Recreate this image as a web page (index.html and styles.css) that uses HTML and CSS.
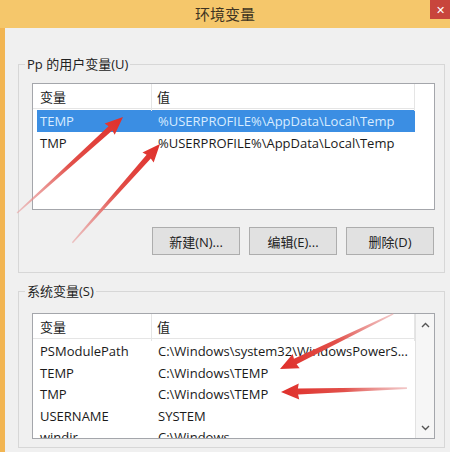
FILE: index.html
```html
<!DOCTYPE html>
<html lang="zh-CN">
<head>
    <meta charset="UTF-8">
    <meta name="viewport" content="width=device-width, initial-scale=1.0">
    <title>环境变量</title>
    <link rel="stylesheet" href="styles.css">
</head>
<body>

    <div class="titlebar">
        <div class="title">环境变量</div>
        <div class="close">✕</div>
    </div>

    <div class="frame">
        <div class="content">
            <!-- User variables -->
            <fieldset class="group user-group">
                <legend>Pp 的用户变量(U)</legend>
                <div class="list list-user">
                    <div class="list-main">
                        <div class="list-head">
                            <div class="cell">变量</div>
                            <div class="cell">值</div>
                        </div>
                        <div class="list-body">
                            <div class="row selected">
                                <span>TEMP</span>
                                <span>%USERPROFILE%\AppData\Local\Temp</span>
                            </div>
                            <div class="row">
                                <span>TMP</span>
                                <span>%USERPROFILE%\AppData\Local\Temp</span>
                            </div>
                        </div>
                    </div>
                </div>
                <div class="buttons">
                    <button class="btn">新建(N)...</button>
                    <button class="btn">编辑(E)...</button>
                    <button class="btn">删除(D)</button>
                </div>
            </fieldset>

            <!-- System variables -->
            <fieldset class="group system-group">
                <legend>系统变量(S)</legend>
                <div class="list list-system">
                    <div class="list-main">
                        <div class="list-head">
                            <div class="cell">变量</div>
                            <div class="cell">值</div>
                        </div>
                        <div class="list-body">
                            <div class="row">
                                <span>PSModulePath</span>
                                <span>C:\Windows\system32\WindowsPowerS...</span>
                            </div>
                            <div class="row">
                                <span>TEMP</span>
                                <span>C:\Windows\TEMP</span>
                            </div>
                            <div class="row">
                                <span>TMP</span>
                                <span>C:\Windows\TEMP</span>
                            </div>
                            <div class="row">
                                <span>USERNAME</span>
                                <span>SYSTEM</span>
                            </div>
                            <div class="row">
                                <span>windir</span>
                                <span>C:\Windows</span>
                            </div>
                        </div>
                    </div>
                    <div class="scrollbar">
                        <svg width="9" height="6" viewBox="0 0 9 6"><path d="M1 5 L4.5 1.5 L8 5" fill="none" stroke="#555" stroke-width="1.4"/></svg>
                        <svg width="9" height="6" viewBox="0 0 9 6"><path d="M1 1 L4.5 4.5 L8 1" fill="none" stroke="#555" stroke-width="1.4"/></svg>
                    </div>
                </div>
            </fieldset>
        </div>
    </div>

    <!-- Red annotation arrows drawn over the dialog -->
    <svg class="arrows" width="450" height="452" viewBox="0 0 450 452">
        <defs>
            <linearGradient id="shaft">
                <stop offset="0" stop-color="#e9a3a3" stop-opacity="0.6"/>
                <stop offset="0.5" stop-color="#e2504a"/>
                <stop offset="1" stop-color="#df302b"/>
            </linearGradient>
        </defs>
        <polygon fill="url(#shaft)" transform="translate(123 117) rotate(-42.2)" points="-143,-0.7 -17,-2.8 -18,-7.5 0,0 -18,7.5 -17,2.8 -143,0.7"/>
        <polygon fill="url(#shaft)" transform="translate(160 144) rotate(-48.4)" points="-132,-0.7 -17,-2.8 -18,-7.5 0,0 -18,7.5 -17,2.8 -132,0.7"/>
        <polygon fill="url(#shaft)" transform="translate(280 369) rotate(154)" points="-126,-0.7 -17,-3 -18,-8 0,0 -18,8 -17,3 -126,0.7"/>
        <polygon fill="url(#shaft)" transform="translate(281 392) rotate(178.2)" points="-126,-0.9 -17,-3 -18,-8 0,0 -18,8 -17,3 -126,0.9"/>
    </svg>

</body>
</html>
```

FILE: styles.css
```css
* {
    box-sizing: border-box;
    margin: 0;
    padding: 0;
}

body {
    width: 450px;
    height: 452px;
    overflow: hidden;
    position: relative;
    background: #f0f0f0;
    font-family: "Open Sans", "Noto Sans CJK SC", sans-serif;
    font-size: 13px;
    color: #1a1a1a;
}

/* Title bar */
.titlebar {
    height: 28px;
    background: #f5c76b;
    display: grid;
    grid-template-columns: 1fr auto 1fr;
}

.title {
    grid-column: 2;
    line-height: 28px;
    font-family: "Noto Sans CJK SC", sans-serif;
    font-size: 15px;
    color: #3e3422;
}

.close {
    grid-column: 3;
    justify-self: end;
    width: 20px;
    height: 19px;
    background: #c8453c;
    color: #fff;
    font-size: 11px;
    line-height: 19px;
    text-align: center;
}

/* Dialog body */
.frame {
    height: 424px;
    border-left: 5px solid #f2b552;
    background: #f0f0f0;
}

.content {
    padding: 27px 5px 0 13px;
}

.group {
    border: 1px solid #d7d7d7;
    padding: 0 9px 0 13px;
}

.group legend {
    margin-left: -7px;
    padding: 0 2px;
    line-height: 18px;
    font-size: 13px;
    color: #222;
}

.user-group {
    padding-bottom: 17px;
}

.system-group {
    margin-top: 9px;
    padding-bottom: 8px;
}

/* List views */
.list {
    display: flex;
    background: #fff;
    border: 1px solid #a4a6ab;
}

.list-user {
    margin-top: 10px;
    height: 127px;
}

.list-system {
    margin-top: 13px;
    height: 126px;
}

.list-main {
    width: 382px;
    overflow: hidden;
}

.list-head {
    display: grid;
    grid-template-columns: 119px 1fr;
    height: 25px;
    border-bottom: 1px solid #e5e5e5;
}

.list-head .cell {
    padding-left: 7px;
    line-height: 27px;
    border-right: 1px solid #e5e5e5;
}

.list-head .cell + .cell {
    padding-left: 5px;
}

.list-body {
    padding-top: 1px;
}

.row {
    display: grid;
    grid-template-columns: 115px 1fr;
    height: 21.5px;
    line-height: 22px;
    margin-left: 4px;
    padding-left: 3px;
    white-space: nowrap;
}

.row span + span {
    padding-left: 3px;
}

.row.selected {
    background: #3b8ee3;
    color: #d8ecff;
}

.scrollbar {
    flex: 1;
    background: #f6f6f6;
    border-left: 1px solid #e2e2e2;
    display: flex;
    flex-direction: column;
    justify-content: space-between;
    align-items: center;
    padding: 8px 0 7px;
}

/* Buttons */
.buttons {
    display: flex;
    justify-content: flex-end;
    gap: 9px;
    margin: 17px 1px 0 0;
}

.btn {
    width: 88px;
    height: 28px;
    background: #e1e1e1;
    border: 1px solid #adadad;
    font-family: "Open Sans", "Noto Sans CJK SC", sans-serif;
    font-size: 13px;
    color: #222;
}

/* Overlay */
.arrows {
    position: absolute;
    left: 0;
    top: 0;
    pointer-events: none;
}
```
